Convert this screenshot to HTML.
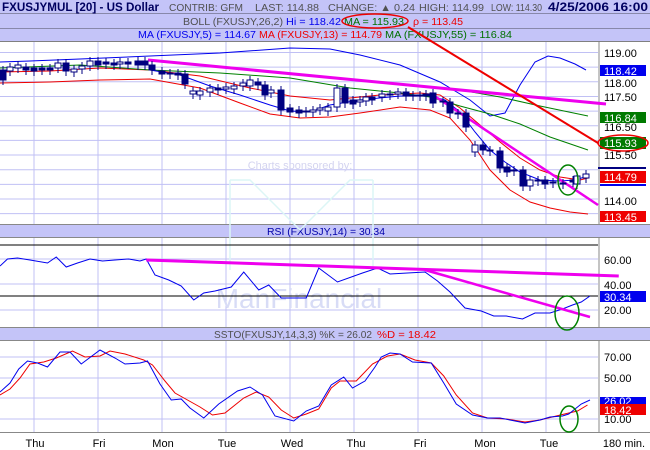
<!DOCTYPE html>
<html><head><meta charset="utf-8"><style>
html,body{margin:0;padding:0;background:#fff;width:650px;height:450px;overflow:hidden}
svg{display:block;font-family:"Liberation Sans",sans-serif}
.n{vector-effect:non-scaling-stroke}
</style></head><body>
<svg id="s" width="650" height="450" xmlns="http://www.w3.org/2000/svg">
<rect width="650" height="450" fill="#fff"/>
<rect x="0" y="0" width="650" height="13" fill="#c4c4f8"/>
<rect x="0" y="13" width="650" height="1" fill="#8888aa"/>
<rect x="0" y="14" width="650" height="14" fill="#c4c4f8"/>
<rect x="0" y="28" width="650" height="1" fill="#8888aa"/>
<rect x="0" y="29" width="650" height="12" fill="#c4c4f8"/>
<rect x="0" y="41" width="650" height="1" fill="#808080"/>
<text x="2" y="11" font-size="12" font-weight="bold" fill="#000060" textLength="157" lengthAdjust="spacingAndGlyphs">FXUSJYMUL [20] - US Dollar</text>
<text x="169" y="11" font-size="10" fill="#505050" textLength="74" lengthAdjust="spacingAndGlyphs">CONTRIB: GFM</text>
<text x="255" y="11" font-size="10" fill="#505050" textLength="64" lengthAdjust="spacingAndGlyphs">LAST: 114.88</text>
<text x="328" y="11" font-size="10" fill="#505050" textLength="87" lengthAdjust="spacingAndGlyphs">CHANGE: ▲ 0.24</text>
<text x="419" y="11" font-size="10" fill="#505050" textLength="65" lengthAdjust="spacingAndGlyphs">HIGH: 114.99</text>
<text x="491" y="11" font-size="10" fill="#505050" textLength="51" lengthAdjust="spacingAndGlyphs">LOW: 114.30</text>
<text x="548" y="11" font-size="12" font-weight="bold" fill="#000060" textLength="100" lengthAdjust="spacingAndGlyphs">4/25/2006 16:00</text>
<text x="183" y="25" font-size="10" fill="#505050" textLength="100" lengthAdjust="spacingAndGlyphs">BOLL (FXUSJY,26,2)</text>
<text x="286" y="25" font-size="10" fill="#0000ee" textLength="55" lengthAdjust="spacingAndGlyphs">Hi = 118.42</text>
<text x="344" y="25" font-size="10" fill="#007000" textLength="60" lengthAdjust="spacingAndGlyphs">MA = 115.93</text>
<text x="413" y="25" font-size="10" fill="#ee0000" textLength="50" lengthAdjust="spacingAndGlyphs">ρ = 113.45</text>
<text x="138" y="38" font-size="10" fill="#0000ee" textLength="118" lengthAdjust="spacingAndGlyphs">MA (FXUSJY,5) = 114.67</text>
<text x="259" y="38" font-size="10" fill="#ee0000" textLength="123" lengthAdjust="spacingAndGlyphs">MA (FXUSJY,13) = 114.79</text>
<text x="385" y="38" font-size="10" fill="#007000" textLength="127" lengthAdjust="spacingAndGlyphs">MA (FXUSJY,55) = 116.84</text>
<ellipse cx="375" cy="21" rx="33" ry="7" fill="none" stroke="#ee0000" stroke-width="1.5"/>

<g id="grid" stroke="#c0c0f4" stroke-width="1"></g>
<line x1="599" y1="42" x2="599" y2="432" stroke="#888"/>
<rect x="0" y="224" width="650" height="1" fill="#888"/>
<rect x="0" y="225" width="650" height="12" fill="#c4c4f8"/>
<rect x="0" y="237" width="650" height="1" fill="#888"/>
<text x="267" y="235" font-size="10" fill="#0000aa" textLength="118" lengthAdjust="spacingAndGlyphs">RSI (FXUSJY,14) = 30.34</text>
<rect x="0" y="327" width="650" height="1" fill="#888"/>
<rect x="0" y="328" width="650" height="12" fill="#c4c4f8"/>
<rect x="0" y="340" width="650" height="1" fill="#888"/>
<text x="214" y="338" font-size="10" fill="#505050" textLength="158" lengthAdjust="spacingAndGlyphs">SSTO(FXUSJY,14,3,3) %K = 26.02</text>
<text x="377" y="338" font-size="10" fill="#ee0000" textLength="59" lengthAdjust="spacingAndGlyphs">%D = 18.42</text>
<rect x="0" y="432" width="650" height="1" fill="#888"/>

<text x="300" y="169" font-size="11" fill="#d4d4f0" text-anchor="middle">Charts sponsored by:</text>
<path d="M230 180 V270 M373 180 V270 M230 180 L250 180 L300 230 L350 180 L373 180" fill="none" stroke="#dcf6f6" stroke-width="1.5"/>
<text x="299" y="308" font-size="28" fill="#d8dcf6" text-anchor="middle">ManFinancial</text>

<g fill="none">
<polyline stroke="#0000ee" stroke-width="1" points="0,62 30,61 80,59 150,56 220,53 290,48 330,49 360,55 400,65 440,82 470,100 490,116 505,113 520,85 535,62 548,56 560,58 575,64 586,70"/>
<polyline stroke="#ee0000" stroke-width="1" points="0,72 50,71 100,68 150,70 200,76 250,88 290,96 330,100 380,95 420,93 440,95 460,108 480,125 500,142 520,158 540,170 560,177 580,180 588,178"/>
<polyline stroke="#008000" stroke-width="1" points="0,68 80,65 150,70 220,73 290,78 350,88 400,93 430,97 460,106 490,114 520,124 550,137 588,150"/>
<polyline stroke="#008000" stroke-width="1" points="430,87 460,90 500,97 540,106 588,116"/>
<polyline stroke="#ee0000" stroke-width="1" points="0,83 50,82 100,80 150,79 200,88 240,103 270,114 300,118 330,117 360,113 400,107 430,110 450,118 470,140 490,170 510,190 530,202 550,208 570,212 588,214"/>
<polyline stroke="#0000ee" stroke-width="1" points="150,70 180,75 210,86 240,95 270,105 290,111 310,112 330,105 360,100 400,96 430,96 445,100 460,112 475,132 490,150 505,162 520,172 540,180 560,181 575,180 588,176"/>
<line x1="148" y1="60" x2="606" y2="104" stroke="#ee00ee" stroke-width="3"/>
<line x1="430" y1="93" x2="598" y2="205" stroke="#ee00ee" stroke-width="2.5"/>
<line x1="408" y1="27" x2="598" y2="143" stroke="#ee0000" stroke-width="2"/>
</g>
<g id="candles"></g>
<ellipse cx="568" cy="180" rx="10" ry="15" fill="none" stroke="#008000" stroke-width="1.5"/>

<line x1="0" y1="245" x2="598" y2="245" stroke="#000"/>
<line x1="0" y1="296" x2="598" y2="296" stroke="#000"/>
<g transform="matrix(1.25 0 0 1 0 0)" fill="none">
<polyline class="n" stroke="#0000ee" points="0,266 6,259 14,258 24,260 38,263 45,257 53,267 62,263 72,259 82,261 92,260 103,259 112,261 117,259 124,275 135,280 145,286 155,300 163,293 172,291 185,287 195,272 207,290 215,285 225,298 245,298 255,268 270,282 290,273 302,268 312,274 340,272 350,281 360,292 372,308 385,311 395,316 405,316 418,319 428,313 440,313 450,309 458,305 465,302 472,296"/>
<line class="n" x1="117" y1="260" x2="495" y2="276" stroke="#ee00ee" stroke-width="3"/>
<line class="n" x1="340" y1="270" x2="472" y2="317" stroke="#ee00ee" stroke-width="2.5"/>
<polyline class="n" stroke="#ee0000" points="0,395 8,389 16,378 24,364 35,362 45,358 58,351 68,357 80,356 88,351 100,354 115,360 122,365 132,381 140,393 150,400 160,407 170,415 180,413 195,398 205,392 215,397 225,410 235,418 245,414 255,409 265,388 272,381 285,381 298,364 310,356 320,354 332,360 345,363 355,376 365,395 378,413 390,418 405,419 420,422 432,420 445,416 455,413 462,411 470,405"/>
<polyline class="n" stroke="#0000ee" points="0,392 8,383 15,369 22,361 30,363 38,367 48,352 56,352 65,364 80,350 92,358 100,364 112,363 118,361 128,384 137,400 145,399 152,408 163,418 175,404 190,391 200,387 210,395 220,416 235,421 245,411 255,406 265,385 275,377 282,388 292,381 300,367 305,357 312,353 320,354 330,362 345,363 355,383 365,404 378,415 390,418 400,418 412,421 420,423 432,420 440,417 450,416 455,414 465,404 472,400"/>
</g>
<ellipse cx="567" cy="313" rx="12" ry="17" fill="none" stroke="#008000" stroke-width="1.5"/>
<ellipse cx="569" cy="419" rx="9" ry="13" fill="none" stroke="#008000" stroke-width="1.5"/>

<g font-size="11" fill="#000">
<text x="604" y="57">119.00</text>
<rect x="600" y="65" width="46" height="11" fill="#0000ee"/><text x="604" y="75" fill="#fff">118.42</text>
<text x="604" y="87">118.00</text>
<text x="604" y="101">117.50</text>
<rect x="600" y="112" width="46" height="11" fill="#007a00"/><text x="604" y="122" fill="#fff">116.84</text>
<text x="604" y="131">116.50</text>
<text x="604" y="159">115.50</text>
<rect x="600" y="137" width="46" height="12" fill="#007a00"/><text x="604" y="147" fill="#fff">115.93</text>
<rect x="598" y="167" width="48" height="2" fill="#000080"/>
<rect x="600" y="171" width="46" height="12" fill="#ee0000"/><text x="604" y="181" fill="#fff">114.79</text>
<rect x="600" y="184" width="46" height="2" fill="#0000ee"/>
<text x="604" y="205">114.00</text>
<rect x="600" y="211" width="46" height="11" fill="#ee0000"/><text x="604" y="221" fill="#fff">113.45</text>
<text x="604" y="264">60.00</text>
<text x="604" y="289">40.00</text>
<rect x="600" y="291" width="46" height="11" fill="#0000ee"/><text x="604" y="301" fill="#fff">30.34</text>
<text x="604" y="314">20.00</text>
<text x="604" y="361">70.00</text>
<text x="604" y="382">50.00</text>
<text x="604" y="423">10.00</text>
<rect x="600" y="397" width="46" height="9" fill="#0000ee"/><text x="604" y="405" fill="#fff">26.02</text>
<rect x="600" y="404" width="46" height="11" fill="#ee0000"/><text x="604" y="414" fill="#fff">18.42</text>
</g>
<ellipse cx="623" cy="143" rx="25" ry="8" fill="none" stroke="#ee0000" stroke-width="1.5"/>
<g font-size="11" fill="#000" text-anchor="middle">
<text x="35" y="447">Thu</text><text x="99" y="447">Fri</text><text x="163" y="447">Mon</text>
<text x="227" y="447">Tue</text><text x="292" y="447">Wed</text><text x="356" y="447">Thu</text>
<text x="420" y="447">Fri</text><text x="485" y="447">Mon</text><text x="549" y="447">Tue</text>
<text x="624" y="447">180 min.</text>
</g>
</svg>
<script>
var NS="http://www.w3.org/2000/svg",g=document.getElementById('grid'),c=document.getElementById('candles');
function L(p,x1,y1,x2,y2,col){var e=document.createElementNS(NS,'line');e.setAttribute('x1',x1);e.setAttribute('y1',y1);e.setAttribute('x2',x2);e.setAttribute('y2',y2);if(col)e.setAttribute('stroke',col);p.appendChild(e);}
for(var y=52.5;y<222;y+=14.65)L(g,0,y,598,y);
for(var x=34;x<598;x+=64)L(g,x,42,x,224);
[259,284,310].forEach(function(y){L(g,0,y,598,y)});
[357,378,398,419].forEach(function(y){L(g,0,y,598,y)});
for(var x=34;x<598;x+=64){L(g,x,238,x,327);L(g,x,341,x,432);}
var d=[[3,70,80,0],[10,67,71,1],[18,65,68,1],[26,67,70,0],[34,68,71,0],[42,68,70,0],[50,68,70,0],[58,63,68,1],[66,63,71,0],[74,69,72,1],[82,66,69,1],[90,61,66,1],[98,61,65,0],[106,62,64,0],[114,63,65,0],[120,62,64,1],[128,62,64,0],[138,61,65,0],[145,61,65,0],[152,65,70,0],[162,71,74,0],[170,73,74,0],[178,73,75,0],[185,74,84,0],[193,91,94,1],[200,91,95,1],[210,88,92,1],[218,88,90,0],[226,87,89,1],[234,86,89,1],[243,83,86,1],[250,80,86,1],[258,82,85,0],[265,85,95,0],[271,90,93,1],[281,90,110,0],[290,108,112,0],[299,110,113,0],[306,111,112,0],[313,110,112,1],[320,108,110,1],[328,107,111,1],[337,88,107,1],[345,88,103,0],[353,100,104,0],[360,100,102,1],[366,97,101,1],[372,97,100,0],[382,94,97,1],[390,94,95,0],[398,92,94,1],[406,92,96,0],[413,95,96,0],[420,95,96,0],[426,94,96,0],[433,93,103,0],[443,101,102,0],[450,102,113,0],[458,113,114,0],[466,113,127,0],[475,145,152,1],[483,145,150,0],[490,150,151,0],[500,151,168,0],[507,167,172,0],[514,170,171,1],[523,170,186,0],[530,180,186,1],[538,180,181,0],[545,180,184,0],[553,182,183,0],[563,183,184,0],[573,180,182,0],[577,176,184,1],[586,174,178,1]];
d.forEach(function(k){var x=k[0];L(c,x,k[1]-4,x,k[2]+5,'#000080');var r=document.createElementNS(NS,'rect');r.setAttribute('x',x-3);r.setAttribute('y',k[1]);r.setAttribute('width',6);r.setAttribute('height',Math.max(1,k[2]-k[1]));r.setAttribute('fill',k[3]?'#fff':'#000080');r.setAttribute('stroke','#000080');c.appendChild(r);});
</script>
</body></html>
